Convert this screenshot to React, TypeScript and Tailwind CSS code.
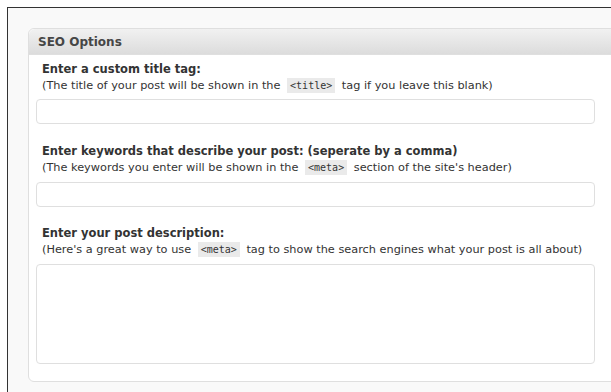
import React from "react";

const Code = ({ children }: { children: React.ReactNode }) => (
  <code className="mx-[3px] bg-[#eaeaea] px-[3px] py-[2px] font-['DejaVu_Sans_Mono',monospace] text-[10px] text-[#333]">
    {children}
  </code>
);

export default function App() {
  return (
    <div className="h-[392px] w-[611px] overflow-hidden bg-white font-['DejaVu_Sans',Verdana,sans-serif]">
      <div className="ml-[7px] mt-[7px] h-[385px] w-[604px] overflow-hidden border-l border-t border-[#333] bg-[#f9f9f9] pl-[20px] pt-[20px]">
        <div className="w-[620px] rounded-[6px] border border-[#dfdfdf] bg-white">
          <div className="flex h-[26px] items-center rounded-t-[6px] border-b border-[#dfdfdf] bg-gradient-to-b from-[#f1f1f1] to-[#dcdcdc] pl-[9px] text-[12px] font-bold text-[#464646]">
            SEO Options
          </div>
          <div className="pb-[17px] pl-[7px] pt-[7px] text-[11.3px] text-[#333]">
            <div className="pl-[6px] leading-[15px]">
              <div className="text-[11.5px] font-bold">Enter a custom title tag:</div>
              <div className="mt-[1px]">
                (The title of your post will be shown in the <Code>&lt;title&gt;</Code> tag if you leave this blank)
              </div>
            </div>
            <div className="mt-[6px] h-[25px] w-[559px] rounded-[4px] border border-[#dfdfdf] bg-white" />

            <div className="mt-[20px] pl-[6px] leading-[15px]">
              <div className="text-[11.5px] font-bold">Enter keywords that describe your post: (seperate by a comma)</div>
              <div className="mt-[1px]">
                (The keywords you enter will be shown in the <Code>&lt;meta&gt;</Code> section of the site's header)
              </div>
            </div>
            <div className="mt-[7px] h-[25px] w-[559px] rounded-[4px] border border-[#dfdfdf] bg-white" />

            <div className="mt-[19px] pl-[6px] leading-[15px]">
              <div className="text-[11.5px] font-bold">Enter your post description:</div>
              <div className="mt-[1px]">
                (Here's a great way to use <Code>&lt;meta&gt;</Code> tag to show the search engines what your post is all about)
              </div>
            </div>
            <div className="mt-[7px] h-[100px] w-[559px] rounded-[4px] border border-[#dfdfdf] bg-white" />
          </div>
        </div>
      </div>
    </div>
  );
}
